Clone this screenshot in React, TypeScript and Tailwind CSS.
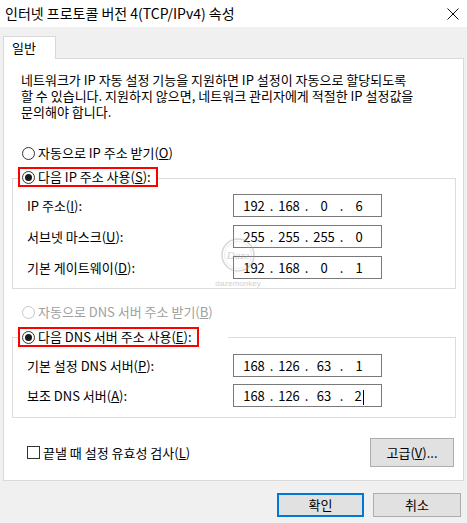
const Radio = ({ checked, disabled }: { checked?: boolean; disabled?: boolean }) => (
  <span
    className={
      disabled
        ? "w-[13px] h-[13px] rounded-full border border-[#c8c8c8] bg-white flex items-center justify-center shrink-0"
        : "w-[13px] h-[13px] rounded-full border border-[#333333] bg-white flex items-center justify-center shrink-0"
    }
  >
    {checked && <span className="w-[7px] h-[7px] rounded-full bg-[#1a1a1a]" />}
  </span>
)

const IpBox = ({ parts, caret }: { parts: string[]; caret?: boolean }) => (
  <div className="w-[149px] h-[23px] border border-[#7a7a7a] bg-white flex items-center pl-[5px]">
    {parts.map((p, i) => (
      <div key={i} className="flex items-center">
        <span className="w-[30px] text-center">
          {p}
          {caret && i === 3 && <span className="inline-block w-[1px] h-[15px] bg-black align-middle ml-[1px]" />}
        </span>
        {i < 3 && <span className="w-[5px] text-center">.</span>}
      </div>
    ))}
  </div>
)

const Row = ({ label, parts, caret }: { label: React.ReactNode; parts: string[]; caret?: boolean }) => (
  <div className="flex items-center h-[23px]">
    <div className="w-[206px]">{label}</div>
    <IpBox parts={parts} caret={caret} />
  </div>
)

export default function App() {
  return (
    <div className="w-[467px] h-[523px] bg-[#f0f0f0] text-black font-['Noto_Sans_CJK_KR','Malgun_Gothic',sans-serif] text-[13px] overflow-hidden">
      {/* title bar */}
      <div className="h-[27px] bg-white flex items-center pl-[5px] pr-[8px]">
        <span className="text-[14px]">인터넷 프로토콜 버전 4(TCP/IPv4) 속성</span>
        <svg className="ml-auto" width="12" height="12" viewBox="0 0 12 12">
          <path d="M0.5 0.5 L11.5 11.5 M11.5 0.5 L0.5 11.5" stroke="#111" strokeWidth="1" />
        </svg>
      </div>

      <div className="pt-[9px]">
        <div className="ml-[3px] w-[53px] h-[23px] border border-b-0 border-[#d9d9d9] bg-white relative z-10 -mb-[1px] pl-[8px] pt-[1px]">
          일반
        </div>

        <div className="mx-[3px] h-[423px] border border-[#d9d9d9] bg-white relative">
          <p className="ml-[17px] mt-[13px] h-[48px] leading-[16px]">
            네트워크가 IP 자동 설정 기능을 지원하면 IP 설정이 자동으로 할당되도록
            <br />
            할 수 있습니다. 지원하지 않으면, 네트워크 관리자에게 적절한 IP 설정값을
            <br />
            문의해야 합니다.
          </p>

          <div className="mt-[23px] h-[20px] ml-[18px] flex items-center gap-[3px]">
            <Radio />
            <span>
              자동으로 IP 주소 받기(<u>O</u>)
            </span>
          </div>

          <div className="mt-[4px] ml-[14px] w-[140px] h-[20px] border-2 border-[#ff0000] bg-white relative z-10 flex items-center gap-[3px] pl-[2px]">
            <Radio checked />
            <span>
              다음 IP 주소 사용(<u>S</u>):
            </span>
          </div>
          <div className="-mt-[9px] ml-[8px] mr-[7px] h-[111px] border border-[#dcdcdc] pt-[15px] pl-[14px] flex flex-col gap-[8px]">
            <Row label={<>IP 주소(<u>I</u>):</>} parts={["192", "168", "0", "6"]} />
            <Row label={<>서브넷 마스크(<u>U</u>):</>} parts={["255", "255", "255", "0"]} />
            <Row label={<>기본 게이트웨이(<u>D</u>):</>} parts={["192", "168", "0", "1"]} />
          </div>

          <div className="mt-[13px] h-[20px] ml-[18px] flex items-center gap-[3px] text-[#a0a0a0]">
            <Radio disabled />
            <span>
              자동으로 DNS 서버 주소 받기(<u>B</u>)
            </span>
          </div>

          <div className="mt-[5px] ml-[14px] w-[210px] h-[20px] bg-white relative z-10 flex">
            <div className="w-[181px] h-[20px] border-2 border-[#ff0000] flex items-center gap-[3px] pl-[2px]">
              <Radio checked />
              <span>
                다음 DNS 서버 주소 사용(<u>E</u>):
              </span>
            </div>
          </div>
          <div className="-mt-[10px] ml-[8px] mr-[7px] h-[81px] border border-[#dcdcdc] pt-[16px] pl-[14px] flex flex-col gap-[7px]">
            <Row label={<>기본 설정 DNS 서버(<u>P</u>):</>} parts={["168", "126", "63", "1"]} />
            <Row label={<>보조 DNS 서버(<u>A</u>):</>} parts={["168", "126", "63", "2"]} caret />
          </div>

          <div className="mt-[20px] h-[29px] flex items-center pl-[23px] pr-[9px]">
            <span className="w-[13px] h-[13px] border border-[#333333] bg-white" />
            <span className="ml-[3px]">
              끝낼 때 설정 유효성 검사(<u>L</u>)
            </span>
            <button className="ml-auto w-[84px] h-[29px] bg-[#e1e1e1] border border-[#adadad]">
              고급(<u>V</u>)...
            </button>
          </div>

          {/* watermark */}
          <div className="absolute left-[212px] top-[178px] w-[44px] flex flex-col items-center opacity-40 pointer-events-none">
            <svg width="36" height="36" viewBox="0 0 36 36">
              <circle cx="18" cy="18" r="16" fill="none" stroke="#9a9a9a" strokeWidth="1.5" />
              <circle cx="18" cy="18" r="13.5" fill="none" stroke="#b0b0b0" strokeWidth="0.6" />
              <text x="18" y="22" textAnchor="middle" fontSize="11" fontStyle="italic" fontFamily="Liberation Serif, serif" fill="#888">
                Daze
              </text>
            </svg>
            <span className="text-[8px] leading-[10px] text-[#888] mt-[6px] font-['Liberation_Sans',sans-serif]">dazemonkey</span>
          </div>
        </div>

        <div className="mt-[12px] flex justify-end pr-[6px] gap-[9px]">
          <button className="w-[87px] h-[24px] bg-[#e1e1e1] border-2 border-[#0078d7]">확인</button>
          <button className="w-[88px] h-[24px] bg-[#e1e1e1] border border-[#adadad]">취소</button>
        </div>
      </div>
    </div>
  )
}
